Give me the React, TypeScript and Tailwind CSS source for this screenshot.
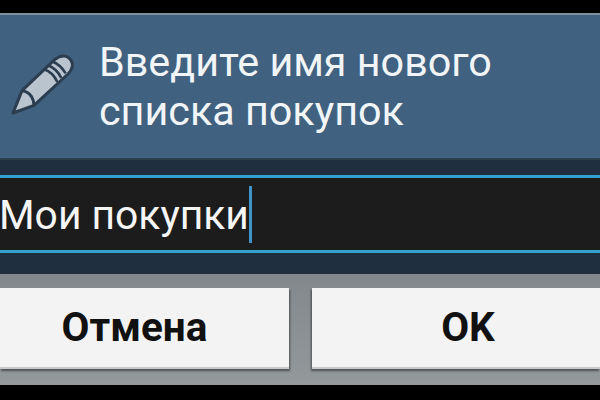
export default function App() {
  return (
    <div className="h-[400px] w-[600px] overflow-hidden bg-black flex flex-col" style={{ fontFamily: "Roboto, 'Noto Sans', sans-serif" }}>
      {/* Status strip */}
      <div className="h-[13px] shrink-0 bg-black" />

      {/* Title */}
      <div className="h-[145px] shrink-0 flex items-center bg-[#40617f] border-t-[2px] border-[#7d8f9f] pl-[8px]">
        <svg width="72" height="72" viewBox="0 0 216 216" className="shrink-0 mb-[5px]">
          <path d="M15 195 L42 128 L140 35 Q158 20 175 25 Q195 35 193 55 Q190 68 180 78 L78 172 Z" fill="#b9c4cf" stroke="#2b3d4e" strokeWidth="9" strokeLinejoin="round" />
          <path d="M42 128 Q60 130 70 145 Q78 158 78 172" fill="none" stroke="#2b3d4e" strokeWidth="9" />
          <path d="M108 64 Q134 72 148 102 M120 52 Q146 62 160 90 M132 40 Q157 50 173 76" fill="none" stroke="#2b3d4e" strokeWidth="8" />
        </svg>
        <div className="ml-[19px] text-[41.3px] leading-[49px] text-[#f2f5f7]">
          <div>Введите имя нового</div>
          <div>списка покупок</div>
        </div>
      </div>

      {/* Input area */}
      <div className="h-[116px] shrink-0 bg-[#1f2f3f] flex flex-col border-t-[2px] border-[#2d3e4d] pt-[15px]">
        <div className="h-[78px] shrink-0 bg-[#1c1c1c] border-y-[3px] border-[#33a2cf] flex items-center">
          <span className="-ml-[1px] text-[40.8px] text-[#f5f5f5] leading-none mt-[2px]">Мои покупки</span>
          <span className="w-[3px] h-[57px] bg-[#3f93c9]" />
        </div>
      </div>

      {/* Buttons */}
      <div className="h-[111px] shrink-0 bg-gradient-to-b from-[#83888c] to-[#93989b] flex justify-between pt-[14px]">
        <button className="w-[289px] h-[81px] pr-[20px] bg-[#f3f3f3] border-b-[2px] border-[#c9c9c9] shadow-[1px_2px_2px_rgba(0,0,0,0.45)] text-[40.5px] font-bold text-[#111]">Отмена</button>
        <button className="w-[288px] h-[81px] pl-[24px] bg-[#f3f3f3] border-b-[2px] border-[#c9c9c9] shadow-[-1px_2px_2px_rgba(0,0,0,0.45)] text-[40.5px] font-bold text-[#111]">OK</button>
      </div>
    </div>
  )
}
